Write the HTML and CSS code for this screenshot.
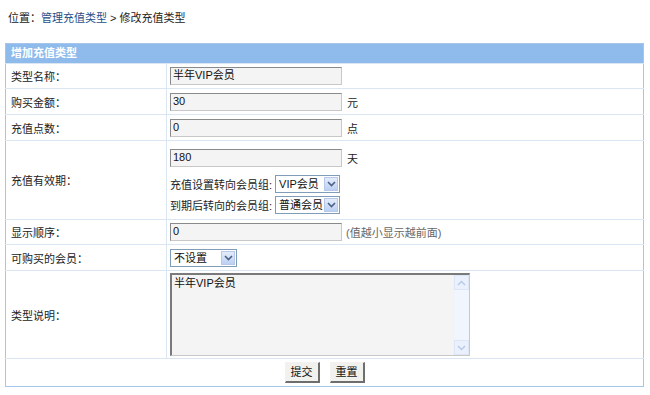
FILE: index.html
```html
<!DOCTYPE html>
<html lang="zh-CN">
<head>
<meta charset="utf-8">
<title>修改充值类型</title>
<link rel="stylesheet" href="styles.css">
</head>
<body>
<div class="crumb">位置：<a class="link" href="#">管理充值类型</a> &gt; 修改充值类型</div>
<table class="form">
  <tr class="head"><td colspan="2">增加充值类型</td></tr>
  <tr class="r1">
    <td class="lbl">类型名称：</td>
    <td class="val"><span class="inp">半年VIP会员</span></td>
  </tr>
  <tr class="r2">
    <td class="lbl">购买金额：</td>
    <td class="val"><span class="inp">30</span><span class="unit">元</span></td>
  </tr>
  <tr class="r2">
    <td class="lbl">充值点数：</td>
    <td class="val"><span class="inp">0</span><span class="unit">点</span></td>
  </tr>
  <tr class="r4">
    <td class="lbl">充值有效期：</td>
    <td class="val v4">
      <div class="line"><span class="inp">180</span><span class="unit">天</span></div>
      <div class="line l2">充值设置转向会员组: <span class="sel w1"><span class="st">VIP会员</span><span class="arr"><svg width="9" height="6" viewBox="0 0 9 6"><path d="M1 1 L4.5 4.5 L8 1" fill="none" stroke="#4d6185" stroke-width="1.6"/></svg></span></span></div>
      <div class="line l3">到期后转向的会员组: <span class="sel w2"><span class="st">普通会员</span><span class="arr"><svg width="9" height="6" viewBox="0 0 9 6"><path d="M1 1 L4.5 4.5 L8 1" fill="none" stroke="#4d6185" stroke-width="1.6"/></svg></span></span></div>
    </td>
  </tr>
  <tr class="r1">
    <td class="lbl">显示顺序：</td>
    <td class="val"><span class="inp">0</span><span class="hint">(值越小显示越前面)</span></td>
  </tr>
  <tr class="r2">
    <td class="lbl">可购买的会员：</td>
    <td class="val"><span class="sel w3"><span class="st">不设置</span><span class="arr"><svg width="9" height="6" viewBox="0 0 9 6"><path d="M1 1 L4.5 4.5 L8 1" fill="none" stroke="#4d6185" stroke-width="1.6"/></svg></span></span></td>
  </tr>
  <tr class="r7">
    <td class="lbl">类型说明：</td>
    <td class="val">
      <div class="ta">
        <div class="tatext">半年VIP会员</div>
        <div class="sb">
          <span class="sbbtn"><svg width="9" height="6" viewBox="0 0 9 6"><path d="M1 5 L4.5 1.5 L8 5" fill="none" stroke="#b7c8e6" stroke-width="1.4"/></svg></span>
          <span class="sbtrack"></span>
          <span class="sbbtn"><svg width="9" height="6" viewBox="0 0 9 6"><path d="M1 1 L4.5 4.5 L8 1" fill="none" stroke="#b7c8e6" stroke-width="1.4"/></svg></span>
        </div>
      </div>
    </td>
  </tr>
  <tr class="foot">
    <td colspan="2"><span class="btn">提交</span><span class="btn">重置</span></td>
  </tr>
</table>
</body>
</html>
```

FILE: styles.css
```css
html, body {
  margin: 0;
  padding: 0;
  background: #fff;
}
body {
  padding: 0 5px;
  font-family: "Liberation Sans", "Noto Sans CJK SC", sans-serif;
  font-size: 11px;
  color: #222;
}
.crumb {
  padding: 11px 3px 0 3px;
  height: 32px;
  box-sizing: border-box;
  line-height: 14px;
  color: #222;
}
.link {
  color: #1f4f8a;
  text-decoration: none;
}
.form {
  width: 639px;
  border-collapse: collapse;
  border: 1px solid #a7c5ea;
  margin-top: 11px;
}
.form td {
  padding: 0;
  border-top: 1px solid #dbe6f3;
  vertical-align: middle;
}
.head td {
  background: #8fbbec;
  color: #fff;
  font-weight: bold;
  height: 19px;
  padding: 0 0 0 5px;
  border-top: 0;
  line-height: 19px;
}
.lbl {
  width: 155px;
  padding-left: 5px !important;
  border-right: 1px solid #dbe6f3;
}
.val {
  padding-left: 3px !important;
}
.r1 td { height: 24px; }
.r2 td { height: 25px; }
.r7 td { height: 87px; }
.foot td {
  height: 27px;
  text-align: center;
}
.inp {
  display: inline-block;
  vertical-align: middle;
  box-sizing: border-box;
  width: 172px;
  height: 18px;
  line-height: 15px;
  padding-left: 2px;
  border: 1px solid #c8c8c8;
  border-top-color: #8a8a8a;
  border-left-color: #8a8a8a;
  background: #f4f4f4;
  color: #111;
}
.unit {
  margin-left: 5px;
  vertical-align: middle;
}
.hint {
  margin-left: 4px;
  color: #666;
  vertical-align: middle;
}
.v4 {
  padding-top: 8px !important;
  padding-bottom: 5px !important;
}
.line {
  display: flex;
  align-items: center;
  height: 18px;
  white-space: nowrap;
}
.l2 { margin-top: 8px; }
.l3 { margin-top: 3px; }
.sel {
  display: inline-flex;
  align-items: center;
  box-sizing: border-box;
  height: 18px;
  border: 1px solid #7f9db9;
  background: #fff;
  margin-left: 3px;
  vertical-align: middle;
  white-space: nowrap;
}
.st {
  flex: 1;
  padding-left: 3px;
  line-height: 16px;
  color: #111;
}
.arr {
  width: 14px;
  height: 14px;
  margin-right: 1px;
  box-sizing: border-box;
  border: 1px solid #b6c9ea;
  background: linear-gradient(#e4ecfb, #bcd0f3);
  display: flex;
  align-items: center;
  justify-content: center;
}
.w1 { width: 65px; }
.w2 { width: 65px; }
.w3 { width: 67px; margin-left: 0; }
.ta {
  display: flex;
  box-sizing: border-box;
  width: 300px;
  height: 83px;
  border: 1px solid #c8c8c8;
  border-top: 2px solid #7a7a7a;
  border-left: 2px solid #7a7a7a;
  background: #f4f4f4;
  margin: 2px 0;
}
.tatext {
  flex: 1;
  padding: 1px 2px;
  line-height: 14px;
  color: #111;
}
.sb {
  width: 15px;
  display: flex;
  flex-direction: column;
  background: #f1f5fd;
  border-left: 1px solid #eef2fb;
}
.sbbtn {
  height: 15px;
  box-sizing: border-box;
  border: 1px solid #dce6f7;
  background: #eaf1fd;
  display: flex;
  align-items: center;
  justify-content: center;
}
.sbtrack {
  flex: 1;
}
.btn {
  display: inline-block;
  vertical-align: middle;
  box-sizing: border-box;
  height: 21px;
  line-height: 18px;
  padding: 0 5px;
  margin: 0 5px;
  border: 1px solid #f2f2f2;
  border-right: 2px solid #6e6e6e;
  border-bottom: 2px solid #6e6e6e;
  background: #f1f1ee;
  color: #111;
}
```
